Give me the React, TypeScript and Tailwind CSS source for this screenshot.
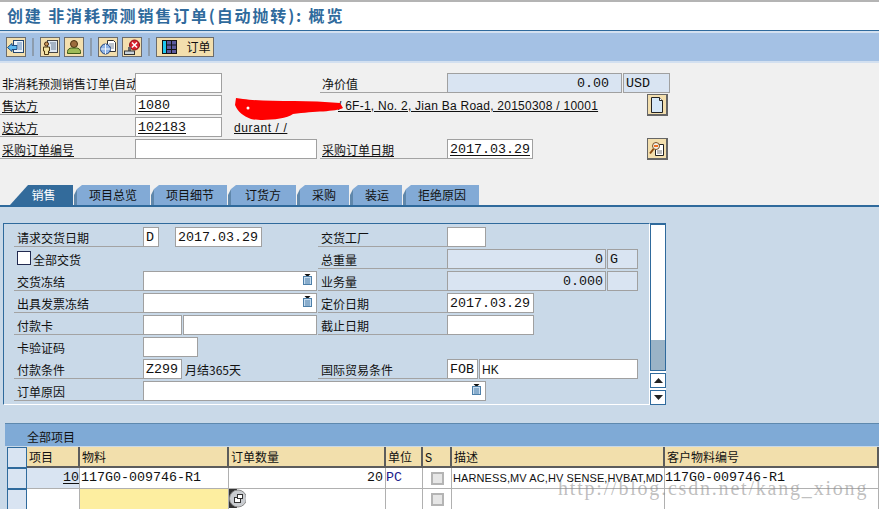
import type { ReactNode } from 'react'

const cjk = '[font-family:"Noto_Sans_CJK_SC",sans-serif]'

function Lbl({ className = '', u, line = true, children }: { className?: string; u?: boolean; line?: boolean; children: ReactNode }) {
  return (
    <div className={`h-5 shrink-0 overflow-hidden whitespace-nowrap pt-[2px] text-[12px] leading-[18px] text-[#111] ${cjk} ${line ? 'border-b border-[#a3a3a3]' : ''} ${className}`}>
      <span className={u ? 'underline underline-offset-1' : ''}>{children}</span>
    </div>
  )
}

function Field({ className = '', v, u, right, sans, tone = 'white', children }: { className?: string; v?: string; u?: boolean; right?: boolean; sans?: boolean; tone?: 'white' | 'ro'; children?: ReactNode }) {
  return (
    <div
      className={`relative flex h-5 shrink-0 items-center overflow-hidden border border-[#a0a0a0] px-[2px] pt-px text-[#111] ${sans ? "font-['Liberation_Sans',sans-serif] text-[12px]" : "font-['Liberation_Mono',monospace] text-[13.33px]"} ${tone === 'ro' ? 'bg-[#d9e4f2]' : 'bg-white'} ${right ? 'justify-end' : ''} ${className}`}
    >
      <span className={u ? 'underline underline-offset-2' : ''}>{v}</span>
      {children}
    </div>
  )
}

function ToolBtn({ children, className = 'w-5' }: { children: ReactNode; className?: string }) {
  return <div className={`flex h-5 items-center justify-center border border-[#6b6b6b] bg-[#f3dfae] ${className}`}>{children}</div>
}

function Sep() {
  return <div className="mx-[6px] h-[18px] w-[2px] bg-[#8c9cae]" />
}

function PickIcon() {
  return (
    <svg width="9" height="11" viewBox="0 0 9 11" className="absolute right-[4px] top-[2px]">
      <path d="M1.500 0h6L4.500 3z" fill="#111" />
      <rect x="0.500" y="2.500" width="8" height="8" fill="#c6dcf0" stroke="#4d7fa8" />
      <path d="M2 5h5M2 7h5M2 9h5" stroke="#4d7fa8" />
    </svg>
  )
}

function Tab({ className, active, children }: { className: string; active?: boolean; children: ReactNode }) {
  return (
    <div
      className={`flex h-5 items-center justify-center text-[12px] ${cjk} ${
        active
          ? 'bg-[#336b9b] pl-1 text-white [clip-path:polygon(18px_0,100%_0,100%_100%,0_100%)]'
          : 'bg-[linear-gradient(90deg,#5f87ab_3px,#82aad6_3px)] pl-[2px] text-[#111] [clip-path:polygon(8px_0,100%_0,100%_100%,0_100%,0_50%,3px_20%)]'
      } ${className}`}
    >
      {children}
    </div>
  )
}

function SelCell() {
  return <div className="border border-[#2f6a9c] bg-[#d9e4f2]" />
}

function HeadCell({ children }: { children?: ReactNode }) {
  return (
    <div className={`overflow-hidden whitespace-nowrap border-b-2 border-r-2 border-[#5c5c5c] bg-[#f2dfac] pl-[2px] text-[12px] leading-[19px] text-[#111] ${cjk}`}>
      {children}
    </div>
  )
}

function Cell({ className = '', sans, children }: { className?: string; sans?: boolean; children?: ReactNode }) {
  return (
    <div className={`flex items-center overflow-hidden whitespace-nowrap border-b border-r border-[#b0b0b0] text-[#111] ${sans ? "font-['Liberation_Sans',sans-serif] text-[11px] tracking-[0.1px]" : "font-['Liberation_Mono',monospace] text-[13.33px]"} ${className}`}>
      {children}
    </div>
  )
}

function Check() {
  return (
    <div className="flex w-full justify-center">
      <div className="h-[13px] w-[13px] border-2 border-[#b4b4b4] bg-[#e6e6e6]" />
    </div>
  )
}

export default function App() {
  return (
    <div className="flex h-[509px] w-[879px] flex-col overflow-hidden bg-[#f0f0f0]">
      {/* title */}
      <div className="h-[31px] shrink-0 border-b border-[#2f6a9c] border-t-2 border-t-[#b4b4b4] bg-white pl-[7px]">
        <h1 className={`text-[16px] font-bold leading-[27px] tracking-[1.85px] text-[#2f6a9c] ${cjk}`}>创建 非消耗预测销售订单(自动抛转): 概览</h1>
      </div>

      {/* toolbar */}
      <div className="flex h-[32px] shrink-0 items-center border-y-2 border-[#d3e0f0] bg-[#a4c1e4] pl-[6px]">
        <ToolBtn>
          <svg width="18" height="16" viewBox="0 0 18 16">
            <rect x="6.500" y="1.500" width="10" height="12" fill="#eef4fb" stroke="#24466e" />
            <path d="M10 4h5M10 6h5M11 8h4M11 10h4" stroke="#5b86b8" />
            <path d="M0.500 8.500 5 4.500v2h5v4H5v2z" fill="#5db8f0" stroke="#1d4a80" />
          </svg>
        </ToolBtn>
        <Sep />
        <ToolBtn>
          <svg width="18" height="16" viewBox="0 0 18 16">
            <rect x="6.500" y="1.500" width="10" height="12" fill="#dfe8f2" stroke="#444" />
            <path d="M9 4h6M10 6h5M10 8h5M10 10h5" stroke="#6b7f95" />
            <circle cx="5.500" cy="5" r="2" fill="#c8955a" stroke="#4a2c10" />
            <path d="M2.500 8h6v4H7.500v3.500h-4V12h-1z" fill="#f4e3a0" stroke="#4a3510" />
          </svg>
        </ToolBtn>
        <div className="w-1" />
        <ToolBtn>
          <svg width="16" height="16" viewBox="0 0 16 16">
            <circle cx="8" cy="5" r="3.500" fill="#9c6b3c" stroke="#4a3010" />
            <path d="M1.500 14.500v-2c0-2 2-3.500 4-3.500h5c2 0 4 1.500 4 3.500v2z" fill="#9dbb57" stroke="#3d5a1a" />
          </svg>
        </ToolBtn>
        <Sep />
        <ToolBtn>
          <svg width="18" height="17" viewBox="0 0 18 17">
            <path d="M8.500 1.500h6l2 2v9h-8z" fill="#fff" stroke="#333" />
            <path d="M10 5h5M11 7h4M11 9h4" stroke="#7a8a9a" />
            <circle cx="6.500" cy="10" r="5" fill="#8fb4e6" stroke="#1d3f7e" />
            <path d="M6.500 5v10M1.500 10h10" stroke="#f0f5fc" />
          </svg>
        </ToolBtn>
        <div className="w-1" />
        <ToolBtn>
          <svg width="18" height="17" viewBox="0 0 18 17">
            <circle cx="11.500" cy="6" r="5" fill="#d8202c" stroke="#8a1016" />
            <path d="M9 3.500l5 5M14 3.500l-5 5" stroke="#fff" strokeWidth="1.500" />
            <rect x="5" y="8" width="3" height="4" fill="#666" />
            <rect x="1.500" y="12" width="10" height="3.500" fill="#c9d4dc" stroke="#333" />
          </svg>
        </ToolBtn>
        <Sep />
        <ToolBtn className={`w-[58px] gap-[9px] pl-[3px] text-[12px] text-[#111] ${cjk}`}>
          <svg width="15" height="14" viewBox="0 0 15 14" className="shrink-0">
            <rect x="0" y="0" width="15" height="14" fill="#141414" />
            <rect x="1" y="1" width="3" height="12" fill="#1ec8f0" />
            <path d="M5 1h4v3.500H5zM10 1h4v3.500h-4zM5 5.500h4V9H5zM10 5.500h4V9h-4zM5 10h4v3H5zM10 10h4v3h-4z" fill="#5a5a9e" />
          </svg>
          <span>订单</span>
        </ToolBtn>
      </div>

      {/* header fields */}
      <div className="flex h-[122px] shrink-0 flex-col pt-[10px]">
        <div className="flex h-[22px]">
          <Lbl className="w-[135px] pl-[2px]">非消耗预测销售订单(自动抛转)</Lbl>
          <Field className="w-[87px]" />
          <Lbl className="ml-[98px] w-[127px] pl-[2px]">净价值</Lbl>
          <Field className="w-[175px] pr-[12px]" tone="ro" right v="0.00" />
          <Field className="ml-px w-[47px]" tone="ro" v="USD" />
        </div>
        <div className="flex h-[22px]">
          <Lbl className="w-[135px] pl-[2px]" u>售达方</Lbl>
          <Field className="w-[87px]" u v="1080" />
          <div className="relative ml-[13px] h-5 w-[412px] pt-[2px] font-['Liberation_Sans',sans-serif] text-[12px] leading-[18px] tracking-[0.25px] text-[#111]">
            <span className="pl-[103px] underline underline-offset-1">/ 6F-1, No. 2, Jian Ba Road, 20150308 / 10001</span>
            <svg width="112" height="28" viewBox="0 0 112 28" className="absolute left-0 top-[-1px]">
              <path d="M1 4 8 5C30 8 70 6 105 9L108 14C100 18 80 17 58 20 50 26 25 27 16 25 8 22 3 18 0 11z" fill="#f00" />
              <circle cx="13" cy="14" r="1.500" fill="#fff" />
            </svg>
          </div>
          <div className="-mt-px flex h-[22px] w-[21px] items-center justify-center border border-b-2 border-r-2 border-[#666] bg-[#f3dfae]">
            <svg width="14" height="16" viewBox="0 0 14 16">
              <path d="M1.500 0.500h8l3 3v12h-11z" fill="#d6e8f8" stroke="#222" />
              <path d="M9.500 0.500v3h3" fill="#fff" stroke="#222" />
            </svg>
          </div>
        </div>
        <div className="flex h-[22px]">
          <Lbl className="w-[135px] pl-[2px]" u>送达方</Lbl>
          <Field className="w-[87px]" u v="102183" />
          <div className="ml-[12px] h-5 pt-[2px] font-['Liberation_Sans',sans-serif] text-[12px] leading-[18px] tracking-[0.6px] text-[#111]">
            <span className="underline underline-offset-1">durant / /</span>
          </div>
        </div>
        <div className="flex h-[22px]">
          <Lbl className="w-[135px] pl-[2px]" u>采购订单编号</Lbl>
          <Field className="w-[182px]" />
          <Lbl className="ml-[3px] w-[127px] pl-[2px]" u>采购订单日期</Lbl>
          <Field className="w-[86px]" u v="2017.03.29" />
          <div className="ml-[114px] -mt-px flex h-[22px] w-[21px] items-center justify-center border border-b-2 border-r-2 border-[#666] bg-[#f3dfae]">
            <svg width="16" height="16" viewBox="0 0 16 16">
              <path d="M6.500 3.500h8v11h-8z" fill="#fff" stroke="#222" />
              <path d="M8 10h5M8 12h5" stroke="#777" />
              <circle cx="7" cy="5" r="3.500" fill="#f4f0e8" stroke="#7a5020" />
              <path d="M5 4h4v2H5z" fill="#f07020" />
              <path d="M4.500 8 1 12.500" stroke="#8a4a10" strokeWidth="2" />
            </svg>
          </div>
        </div>
      </div>

      {/* tabs */}
      <div className="flex h-[22px] shrink-0 items-start gap-px border-b-2 border-[#2f6a9c] pl-[10px]">
        <Tab active className="w-[63px]">销售</Tab>
        <Tab className="w-[76px]">项目总览</Tab>
        <Tab className="w-[76px]">项目细节</Tab>
        <Tab className="w-[68px]">订货方</Tab>
        <Tab className="w-[52px]">采购</Tab>
        <Tab className="w-[52px]">装运</Tab>
        <Tab className="w-[76px]">拒绝原因</Tab>
      </div>

      {/* tab panel */}
      <div className="flex min-h-0 flex-1 flex-col bg-[#c9d9e8] pt-[16px]">
        <div className="ml-[3px] flex h-[182px] shrink-0">
          <div className="w-[647px] border border-b-white border-l-[#2f6a9c] border-r-white border-t-[#2f6a9c] pl-[10px] pt-[3px]">
            <div className="flex h-[22px]">
              <div className="flex w-[304px]">
                <Lbl className="w-[129px] pl-[3px]">请求交货日期</Lbl>
                <Field className="w-4" v="D" />
                <Field className="ml-4 w-[87px]" v="2017.03.29" />
              </div>
              <Lbl className="w-[129px] pl-[3px]">交货工厂</Lbl>
              <Field className="w-[39px]" />
            </div>
            <div className="flex h-[22px]">
              <div className="flex w-[304px] items-start">
                <div className="ml-[3px] mt-[2px] h-[14px] w-[14px] border border-[#222a50] bg-white" />
                <Lbl line={false} className="ml-[2px]">全部交货</Lbl>
              </div>
              <Lbl className="w-[129px] pl-[3px]">总重量</Lbl>
              <Field className="w-[159px]" tone="ro" right v="0" />
              <Field className="ml-px w-[31px]" tone="ro" v="G" />
            </div>
            <div className="flex h-[22px]">
              <div className="flex w-[304px]">
                <Lbl className="w-[129px] pl-[3px]">交货冻结</Lbl>
                <Field className="w-[174px]"><PickIcon /></Field>
              </div>
              <Lbl className="w-[129px] pl-[3px]">业务量</Lbl>
              <Field className="w-[159px]" tone="ro" right v="0.000" />
              <Field className="ml-px w-[31px]" tone="ro" />
            </div>
            <div className="flex h-[22px]">
              <div className="flex w-[304px]">
                <Lbl className="w-[129px] pl-[3px]">出具发票冻结</Lbl>
                <Field className="w-[174px]"><PickIcon /></Field>
              </div>
              <Lbl className="w-[129px] pl-[3px]">定价日期</Lbl>
              <Field className="w-[87px]" v="2017.03.29" />
            </div>
            <div className="flex h-[22px]">
              <div className="flex w-[304px]">
                <Lbl className="w-[129px] pl-[3px]">付款卡</Lbl>
                <Field className="w-[39px]" />
                <Field className="ml-px w-[134px]" />
              </div>
              <Lbl className="w-[129px] pl-[3px]">截止日期</Lbl>
              <Field className="w-[87px]" />
            </div>
            <div className="flex h-[22px]">
              <Lbl line={false} className="w-[129px] pl-[3px]">卡验证码</Lbl>
              <Field className="w-[55px]" />
            </div>
            <div className="flex h-[22px]">
              <div className="flex w-[304px]">
                <Lbl className="w-[129px] pl-[3px]">付款条件</Lbl>
                <Field className="w-[39px]" v="Z299" />
                <Lbl line={false} className="ml-[3px]">月结365天</Lbl>
              </div>
              <Lbl className="w-[129px] pl-[3px]">国际贸易条件</Lbl>
              <Field className="w-[31px]" v="FOB" />
              <Field className="ml-px w-[159px]" sans v="HK" />
            </div>
            <div className="flex h-[22px]">
              <Lbl className="w-[129px] pl-[3px]">订单原因</Lbl>
              <Field className="w-[343px]"><PickIcon /></Field>
            </div>
          </div>

          {/* scrollbar */}
          <div className="flex w-4 flex-col bg-white">
            <div className="flex flex-1 flex-col justify-end border-x border-t-2 border-[#2f6a9c] bg-white">
              <div className="h-[31px] border-b border-[#2f6a9c] bg-[#9ab3c6]" />
            </div>
            <div className="mt-[2px] flex h-[15px] items-center justify-center border border-[#2f6a9c] bg-white">
              <svg width="9" height="5" viewBox="0 0 9 5"><path d="M4.500 0 9 5H0z" fill="#222" /></svg>
            </div>
            <div className="mt-[2px] flex h-[15px] items-center justify-center border border-[#2f6a9c] bg-white">
              <svg width="9" height="5" viewBox="0 0 9 5"><path d="M0 0h9L4.500 5z" fill="#222" /></svg>
            </div>
          </div>
        </div>

        {/* items table */}
        <div className="relative ml-[5px] mt-[18px] flex-1">
          <div className={`h-[23px] border-t border-[#5e89ae] bg-[#7faad6] pl-[22px] text-[12px] leading-[26px] text-[#111] ${cjk}`}>全部项目</div>
          <div className="mt-px grid h-[63px] grid-cols-[2px_20px_53px_149px_157px_37px_29px_213px_214px] grid-rows-[21px_21px_21px]">
            <div />
            <SelCell />
            <HeadCell>项目</HeadCell>
            <HeadCell>物料</HeadCell>
            <HeadCell>订单数量</HeadCell>
            <HeadCell>单位</HeadCell>
            <HeadCell><span className="font-['Liberation_Mono',monospace]">S</span></HeadCell>
            <HeadCell>描述</HeadCell>
            <HeadCell>客户物料编号</HeadCell>

            <div />
            <SelCell />
            <Cell className="justify-end bg-[#d9e4f2]"><span className="underline underline-offset-2">10</span></Cell>
            <Cell className="bg-white pl-px">117G0-009746-R1</Cell>
            <Cell className="justify-end bg-white pr-[2px]">20</Cell>
            <Cell className="bg-white"><span className="text-[#1a1a8c]">PC</span></Cell>
            <Cell className="bg-white"><Check /></Cell>
            <Cell sans className="bg-white pl-[1px]">HARNESS,MV AC,HV SENSE,HVBAT,MD</Cell>
            <Cell className="bg-white">117G0-009746-R1</Cell>

            <div />
            <SelCell />
            <Cell className="bg-white" />
            <Cell className="bg-[#fdeea0]" />
            <Cell className="items-start bg-white">
              <svg width="17" height="19" viewBox="0 0 17 19" className="shrink-0">
                <rect width="8" height="19" fill="#333" />
                <circle cx="9" cy="9.500" r="8.500" fill="#c9ccd0" stroke="#8a8a8a" />
                <rect x="5.500" y="8.500" width="6" height="5" fill="#fff" stroke="#333" />
                <rect x="8.500" y="5.500" width="5" height="4" fill="#fff" stroke="#333" />
              </svg>
            </Cell>
            <Cell className="bg-white" />
            <Cell className="bg-white"><Check /></Cell>
            <Cell className="bg-white" />
            <Cell className="bg-white" />
          </div>
          <div className="absolute left-[553px] top-[50px] whitespace-nowrap font-['Liberation_Serif',serif] text-[20px] tracking-[1.8px] text-[#8a8a8a]/55">
            http://blog.csdn.net/kang_xiong
          </div>
        </div>
      </div>
    </div>
  )
}
